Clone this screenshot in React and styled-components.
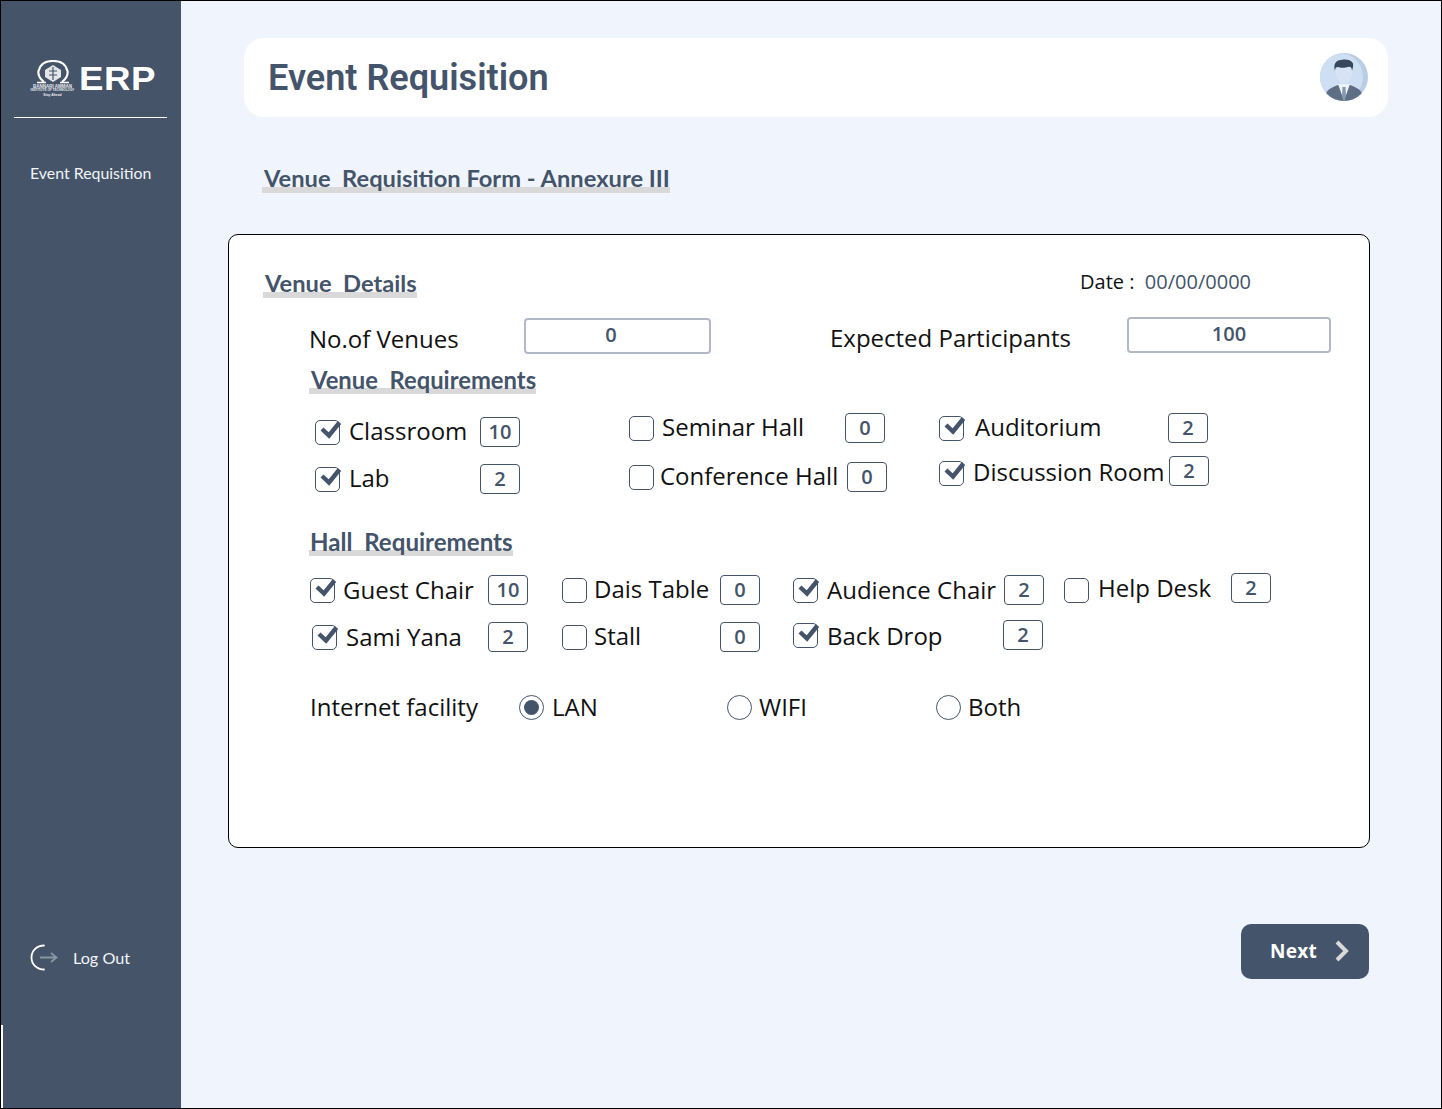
import React from 'react';
import styled, { createGlobalStyle } from 'styled-components';

const GlobalStyle = createGlobalStyle`
    html, body {
        margin: 0;
        padding: 0;
        background: #f0f4fc;
    }
    * {
        box-sizing: border-box;
    }
`;

const Frame = styled.div`
    position: relative;
    width: 1442px;
    height: 1109px;
    border: 1px solid #000;
    display: flex;
    overflow: hidden;
    background: #f0f4fc;
    font-family: "Open Sans", sans-serif;
`;

const Sidebar = styled.aside`
    width: 180px;
    flex-shrink: 0;
    background: #455468;
    display: flex;
    flex-direction: column;
    padding: 60px 14px 0 13px;
    color: #fff;
`;

const Logo = styled.div`
    height: 56px;
    display: flex;
    align-items: flex-start;
    padding-left: 16px;
    gap: 4px;
`;

const Emblem = styled.div`
    width: 45px;
    margin-top: -1px;
    display: flex;
    flex-direction: column;
    align-items: center;
`;

const TinyLine = styled.span`
    display: block;
    font-family: "Liberation Sans", sans-serif;
    font-size: ${(p) => p.$size}px;
    line-height: ${(p) => p.$size + 0.6}px;
    font-weight: 700;
    white-space: nowrap;
    color: #e8ebef;
`;

const ErpText = styled.span`
    font-family: "Liberation Sans", sans-serif;
    font-size: 34px;
    font-weight: 700;
    line-height: 34px;
    display: inline-block;
    transform: scaleX(1.08);
    transform-origin: left top;
    letter-spacing: 0.5px;
`;

const Divider = styled.div`
    height: 1px;
    background: #fff;
    flex-shrink: 0;
`;

const NavItem = styled.div`
    margin: 45px 0 0 16px;
    font-family: Lato, sans-serif;
    font-size: 15.9px;
    line-height: 20px;
    color: #f2f4f7;
    white-space: nowrap;
`;

const LogOut = styled.div`
    margin: auto 0 137px 16px;
    display: flex;
    align-items: center;
    gap: 15px;
    font-family: Lato, sans-serif;
    font-size: 16.2px;
    color: #f2f4f7;
`;

const EdgeLine = styled.div`
    position: absolute;
    left: 0;
    bottom: 0;
    width: 2px;
    height: 83px;
    background: #fff;
`;

const Main = styled.main`
    flex: 1;
    padding: 37px 0 0 47px;
    display: flex;
    flex-direction: column;
    align-items: flex-start;
`;

const TopBar = styled.header`
    width: 1144px;
    height: 79px;
    margin-left: 16px;
    flex-shrink: 0;
    background: #fff;
    border-radius: 20px;
    display: flex;
    align-items: center;
    justify-content: space-between;
    padding: 0 20px 0 24px;
`;

const Title = styled.h1`
    margin: 0;
    font-family: Roboto, sans-serif;
    font-size: 36.1px;
    font-weight: 600;
    color: #44546a;
`;

const AvatarSvg = styled.svg`
    margin-bottom: 1px;
`;

const Heading = styled.h2`
    display: inline-block;
    margin: ${(p) => p.$margin || 0};
    height: 28px;
    padding: 0 0 0 ${(p) => p.$pad ?? 2}px;
    font-family: Lato, sans-serif;
    font-size: ${(p) => p.$size || 23.8}px;
    font-weight: 700;
    line-height: ${(p) => p.$line || 28}px;
    color: #44546a;
    white-space: pre;
    background: linear-gradient(#d9d9d9, #d9d9d9) left bottom / 100% 6px no-repeat;
`;

const Card = styled.section`
    width: 1142px;
    height: 614px;
    margin-top: 41px;
    flex-shrink: 0;
    background: #fff;
    border: 1px solid #000;
    border-radius: 10px;
    padding: 35px 0 0 34px;
`;

const DetailsHead = styled.div`
    display: flex;
    justify-content: space-between;
    padding-right: 118px;
`;

const DateText = styled.div`
    font-size: 20px;
    line-height: 24px;
    color: #111;
    white-space: pre;
`;

const DateValue = styled.span`
    color: #44546a;
`;

const Section = styled.div`
    padding-left: 46px;
`;

const TotalsRow = styled.div`
    margin-top: 19px;
    height: 37px;
    display: grid;
    grid-template-columns: 215px 187px 119px 297px 204px;
`;

const FieldLabel = styled.div`
    padding-top: ${(p) => p.$top}px;
    padding-left: ${(p) => p.$left || 0}px;
    padding-bottom: ${(p) => p.$bottom || 0}px;
    font-size: 24px;
    line-height: 32px;
    color: #111;
    white-space: nowrap;
`;

const ValueBox = styled.div`
    height: 36px;
    margin-top: ${(p) => p.$top || 0}px;
    background: #fff;
    border: 2px solid #b2b9c6;
    border-radius: 4px;
    padding-right: ${(p) => p.$pad || 0}px;
    text-align: center;
    font-size: 20px;
    font-weight: 550;
    line-height: 30px;
    color: #44546a;
`;

const OptionGrid = styled.div`
    display: grid;
    grid-template-columns: ${(p) => p.$cols};
    height: ${(p) => p.$height}px;
    margin-top: ${(p) => p.$top || 0}px;
`;

const Option = styled.div`
    display: flex;
    align-items: center;
    height: 30px;
    margin-left: ${(p) => p.$x || 0}px;
    margin-top: ${(p) => p.$y || 0}px;
`;

const CheckBox = styled.span`
    position: relative;
    width: 25px;
    height: 25px;
    flex-shrink: 0;
    margin-top: ${(p) => p.$drop || 0}px;
    margin-right: ${(p) => p.$gap}px;
    border: 1px solid #44546a;
    border-radius: 5px;
    background: #fff;
`;

const CheckMark = styled.svg`
    position: absolute;
    left: 2px;
    top: -1px;
    width: 24px;
    height: 22px;
    overflow: visible;
`;

const OptionLabel = styled.span`
    width: ${(p) => p.$width}px;
    flex-shrink: 0;
    margin-top: ${(p) => p.$shift}px;
    font-size: 24px;
    line-height: 30px;
    color: #111;
    white-space: nowrap;
`;

const Count = styled.span`
    width: 40px;
    height: 30px;
    flex-shrink: 0;
    border: 1px solid #44546a;
    border-radius: 4px;
    text-align: center;
    font-size: 20px;
    font-weight: 550;
    line-height: 28px;
    color: #44546a;
`;

const RadioRow = styled.div`
    display: grid;
    grid-template-columns: 210px 208px 209px 1fr;
    grid-template-rows: 25px;
    align-items: center;
    height: 25px;
    margin-top: 43px;
`;

const RadioOption = styled.div`
    display: flex;
    align-items: center;
    gap: ${(p) => p.$gap}px;
    font-size: 24px;
    color: #111;
`;

const RadioText = styled.span`
    line-height: 25px;
    margin-top: -2px;
`;

const RadioCircle = styled.span`
    width: 25px;
    height: 25px;
    border-radius: 50%;
    border: 1px solid #44546a;
    background: #fff;
    display: flex;
    align-items: center;
    justify-content: center;
    &::after {
        content: "";
        display: ${(p) => (p.$on ? 'block' : 'none')};
        width: 15px;
        height: 15px;
        border-radius: 50%;
        background: #44546a;
    }
`;

const NextButton = styled.button`
    width: 128px;
    height: 55px;
    margin: 76px 0 0 1013px;
    flex-shrink: 0;
    border: 0;
    border-radius: 10px;
    background: #44546a;
    color: #fff;
    font-family: "Noto Sans", sans-serif;
    font-size: 19px;
    font-weight: 700;
    letter-spacing: 0.4px;
    display: flex;
    align-items: center;
    padding: 0 0 2px 29px;
    gap: 17px;
`;

const venueRows = [
    {
        height: 43,
        cells: [
            { name: 'Classroom', on: true, x: 6, y: 4, gap: 9, width: 131, count: 10 },
            { name: 'Seminar Hall', gap: 8, width: 183, count: 0 },
            { name: 'Auditorium', on: true, gap: 11, width: 193, count: 2 },
        ],
    },
    {
        height: 38,
        cells: [
            { name: 'Lab', on: true, x: 6, y: 8, gap: 9, width: 131, count: 2 },
            { name: 'Conference Hall', y: 6, gap: 6, width: 187, count: 0 },
            { name: 'Discussion Room', on: true, drop: 4, shift: 2, gap: 9, width: 196, count: 2 },
        ],
    },
];

const hallRows = [
    {
        height: 47,
        cells: [
            { name: 'Guest Chair', on: true, x: 1, y: 2, shift: 0, gap: 8, width: 145, count: 10 },
            { name: 'Dais Table', y: 2, gap: 7, width: 126, count: 0 },
            { name: 'Audience Chair', on: true, y: 2, shift: 0, gap: 9, width: 177, count: 2 },
            { name: 'Help Desk', drop: 4, shift: 0, gap: 9, width: 133, count: 2 },
        ],
    },
    {
        height: 32,
        cells: [
            { name: 'Sami Yana', on: true, x: 3, y: 2, shift: 0, gap: 9, width: 142, count: 2 },
            { name: 'Stall', y: 2, gap: 7, width: 126, count: 0 },
            { name: 'Back Drop', on: true, drop: 1, shift: 2, gap: 9, width: 176, count: 2 },
        ],
    },
];

const OmegaIcon = () => (
    <svg width="36" height="24" viewBox="0 0 36 24" fill="none">
        <path d="M9 22C4 18 3 14 3.500 11C5 4 11 1 18 1C25 1 31 4 32.500 11C33 14 32 18 27 22" stroke="#fff" strokeWidth="2.200" />
        <path d="M2 22.500H11M25 22.500H34" stroke="#fff" strokeWidth="1.600" />
        <path d="M18 5L26 10V17L18 22L10 17V10Z" fill="#fff" opacity="0.85" />
        <path d="M14 11H22M14 15H22M18 7V20" stroke="#455468" strokeWidth="1.200" />
    </svg>
);

const LogOutIcon = () => (
    <svg width="28" height="27" viewBox="0 0 28 27" fill="none">
        <path d="M14 1.500C7 1.500 1.500 6.500 1.500 13.500C1.500 20.500 7 25.500 14 25.500" stroke="#fff" strokeWidth="1.800" strokeLinecap="round" />
        <path d="M10 13.500H26M21 9L26.500 13.500L21 18" stroke="#8b95a3" strokeWidth="1.800" />
    </svg>
);

const Avatar = () => (
    <AvatarSvg width="48" height="48" viewBox="0 0 48 48">
        <defs>
            <clipPath id="avatarClip">
                <circle cx="24" cy="24" r="24" />
            </clipPath>
        </defs>
        <g clipPath="url(#avatarClip)">
            <rect width="48" height="48" fill="#b9cde4" />
            <circle cx="19" cy="24" r="24" fill="#cfdff3" />
            <path d="M6 48V41C7 36 13 34 18 32H30C35 34 41 36 42 41V48Z" fill="#5d6e85" />
            <path d="M18 31L24 48L30 31Z" fill="#eef3fa" />
            <path d="M22.500 34H25.500L26 44L24 48L22 44Z" fill="#8597aa" />
            <path d="M15 12C15 24 19 30 24 30C29 30 33 24 33 12Z" fill="#d6e4f6" />
            <path d="M15 18C13 11 16 7 21 7C23 6 30 6 32 9C34 11 33 15 32 18C32 14 30 13 28 14C25 15 20 15 18 14C16 14 15 15 15 18Z" fill="#36465b" />
        </g>
    </AvatarSvg>
);

const Chevron = () => (
    <svg width="16" height="22" viewBox="0 0 16 22" fill="none">
        <path d="M3 2L12 11L3 20" stroke="#d9d9d9" strokeWidth="4" />
    </svg>
);

const Choice = ({ name, on, x, y, drop, shift = -2, gap, width, count }) => (
    <Option $x={x} $y={y}>
        <CheckBox $gap={gap} $drop={drop}>
            {on && (
                <CheckMark viewBox="0 0 24 22" fill="none">
                    <path d="M4 9L11 15.500L21.500 2.500" stroke="#44546a" strokeWidth="4.400" />
                </CheckMark>
            )}
        </CheckBox>
        <OptionLabel $width={width} $shift={shift}>{name}</OptionLabel>
        <Count>{count}</Count>
    </Option>
);

const App = () => {
    return (
        <Frame>
            <GlobalStyle />
            <Sidebar>
                <Logo>
                    <Emblem>
                        <OmegaIcon />
                        <TinyLine $size={4.5}>BANNARI AMMAN</TinyLine>
                        <TinyLine $size={3.1}>INSTITUTE OF TECHNOLOGY</TinyLine>
                        <TinyLine $size={3.4}>Stay Ahead</TinyLine>
                    </Emblem>
                    <ErpText>ERP</ErpText>
                </Logo>
                <Divider />
                <NavItem>Event Requisition</NavItem>
                <LogOut>
                    <LogOutIcon />
                    Log Out
                </LogOut>
            </Sidebar>
            <EdgeLine />
            <Main>
                <TopBar>
                    <Title>Event Requisition</Title>
                    <Avatar />
                </TopBar>
                <Heading $margin="48px 0 0 34px" $size={23.7} $line={26}>{'Venue  Requisition Form - Annexure III'}</Heading>
                <Card>
                    <DetailsHead>
                        <Heading $size={23.7} $line={26}>{'Venue  Details'}</Heading>
                        <DateText>
                            {'Date :  '}
                            <DateValue>00/00/0000</DateValue>
                        </DateText>
                    </DetailsHead>
                    <Section>
                        <TotalsRow>
                            <FieldLabel $top={6}>No.of Venues</FieldLabel>
                            <ValueBox $top={1} $pad={13}>0</ValueBox>
                            <span />
                            <FieldLabel $top={5}>Expected Participants</FieldLabel>
                            <ValueBox>100</ValueBox>
                        </TotalsRow>
                        <Heading $margin="12px 0 0 0">{'Venue  Requirements'}</Heading>
                        {venueRows.map((row, i) => (
                            <OptionGrid key={i} $cols="320px 310px 1fr" $height={row.height} $top={i === 0 ? 19 : 0}>
                                {row.cells.map((cell) => (
                                    <Choice key={cell.name} {...cell} />
                                ))}
                            </OptionGrid>
                        ))}
                        <Heading $margin="34px 0 0 0" $pad={1} $size={24.1}>{'Hall  Requirements'}</Heading>
                        {hallRows.map((row, i) => (
                            <OptionGrid key={i} $cols="253px 231px 271px 1fr" $height={row.height} $top={i === 0 ? 17 : 0}>
                                {row.cells.map((cell) => (
                                    <Choice key={cell.name} {...cell} />
                                ))}
                            </OptionGrid>
                        ))}
                        <RadioRow>
                            <FieldLabel $top={0} $left={1} $bottom={2}>Internet facility</FieldLabel>
                            <RadioOption $gap={8}><RadioCircle $on /><RadioText>LAN</RadioText></RadioOption>
                            <RadioOption $gap={7}><RadioCircle /><RadioText>WIFI</RadioText></RadioOption>
                            <RadioOption $gap={7}><RadioCircle /><RadioText>Both</RadioText></RadioOption>
                        </RadioRow>
                    </Section>
                </Card>
                <NextButton>
                    Next
                    <Chevron />
                </NextButton>
            </Main>
        </Frame>
    );
};

export default App;
